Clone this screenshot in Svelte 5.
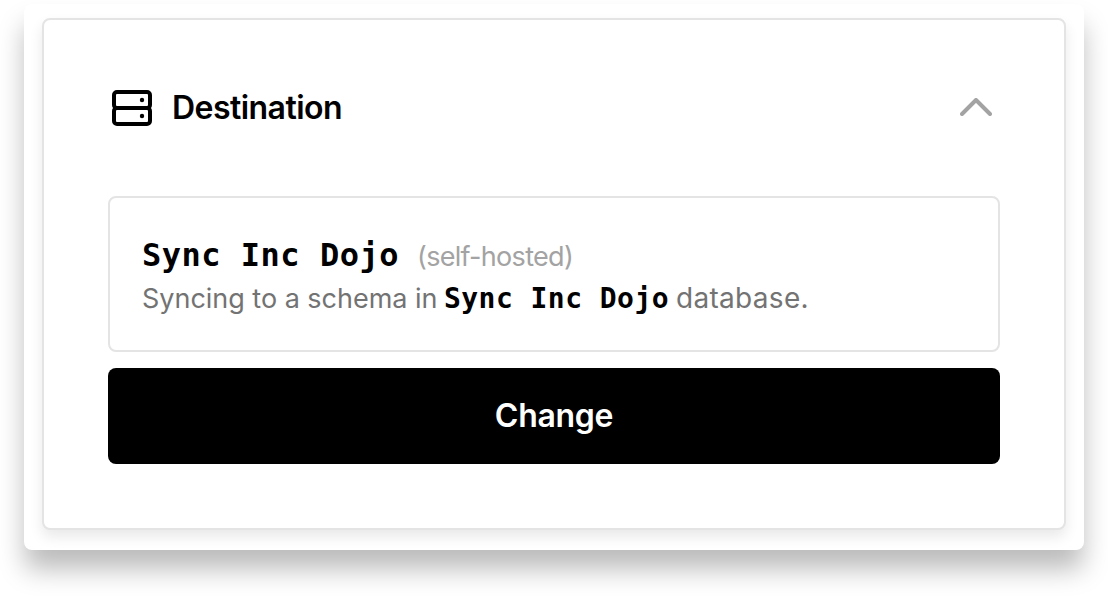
<script>
	let name = "Sync Inc Dojo"
	let open = $state(true)
</script>

<main>
	<div class="panel">
		<section class="card">
			<header>
				<svg class="drive" viewBox="0 0 40 36" fill="none" stroke="currentColor" stroke-width="4">
					<rect x="2" y="2" width="36" height="16" rx="3" />
					<rect x="2" y="18" width="36" height="16" rx="3" />
					<circle cx="30" cy="10" r="2.2" fill="currentColor" stroke="none" />
					<circle cx="30" cy="26" r="2.2" fill="currentColor" stroke="none" />
				</svg>
				<h2>Destination</h2>
				<button class="toggle" aria-label="Toggle" onclick={() => open = !open}>
					<svg viewBox="0 0 32 18" fill="none" stroke="currentColor" stroke-width="4" stroke-linecap="round" stroke-linejoin="round">
						<path d="M2 16 16 2l14 14" />
					</svg>
				</button>
			</header>

			{#if open}
				<div class="database">
					<div class="title">
						<strong>{name}</strong>
						<span class="host">(self-hosted)</span>
					</div>
					<div class="info">
						<span class="lead">Syncing to a schema in</span>
						<strong>{name}</strong>
						<span class="tail">database.</span>
					</div>
				</div>
				<button class="change">Change</button>
			{/if}
		</section>
	</div>
</main>

<style>
	:global(body) {
		background: #fff;
	}

	main {
		box-sizing: border-box;
		height: 596px;
		padding: 4px 24px 0;
		overflow: hidden;
		background: #fff;
	}

	.panel {
		box-sizing: border-box;
		width: 1060px;
		height: 546px;
		padding: 14px 18px 0;
		border-radius: 8px;
		background: #fff;
		box-shadow: 0 20px 27px -1px rgba(0, 0, 0, 0.27);
		font-family: Inter, sans-serif;
	}

	.card {
		box-sizing: border-box;
		height: 512px;
		padding: 62px 64px 0;
		border: 2px solid #e4e4e4;
		border-radius: 8px;
		background: #fff;
		box-shadow: 0 7px 14px rgba(0, 0, 0, 0.09);
	}

	header {
		display: flex;
		align-items: center;
		height: 52px;
		padding: 0 8px 0 4px;
	}

	.drive {
		width: 40px;
		height: 36px;
	}

	h2 {
		flex: 1;
		margin: 0 0 0 20px;
		font-size: 32px;
		font-weight: 600;
		line-height: 40px;
		letter-spacing: -0.55px;
	}

	button {
		padding: 0;
		border: none;
		font: inherit;
	}

	.toggle {
		display: flex;
		margin-bottom: 2px;
		background: none;
		color: #a3a3a3;
	}

	.toggle svg {
		width: 32px;
		height: 18px;
	}

	.database {
		box-sizing: border-box;
		height: 156px;
		margin-top: 62px;
		padding: 35px 32px 0;
		border: 2px solid #e4e4e4;
		border-radius: 8px;
		white-space: nowrap;
	}

	.title,
	.info {
		display: flex;
		align-items: baseline;
		line-height: 44px;
	}

	.title {
		height: 43px;
	}

	strong {
		font-family: "DejaVu Sans Mono", monospace;
		font-weight: 700;
		color: #000;
	}

	.title strong {
		width: 275px;
		font-size: 32px;
		letter-spacing: 0.5px;
	}

	.host {
		font-size: 27px;
		letter-spacing: -0.7px;
		color: #a3a3a3;
	}

	.info {
		font-size: 27px;
		color: #737373;
	}

	.lead {
		width: 302px;
		letter-spacing: -0.02px;
	}

	.info strong {
		width: 232px;
		font-size: 28px;
		letter-spacing: 0.45px;
	}

	.tail {
		font-size: 28px;
		letter-spacing: 0.3px;
	}

	.change {
		display: block;
		width: 100%;
		height: 96px;
		margin-top: 16px;
		padding-bottom: 2px;
		border-radius: 8px;
		background: #000;
		color: #fff;
		font-size: 32px;
		font-weight: 600;
		letter-spacing: -0.3px;
	}
</style>
